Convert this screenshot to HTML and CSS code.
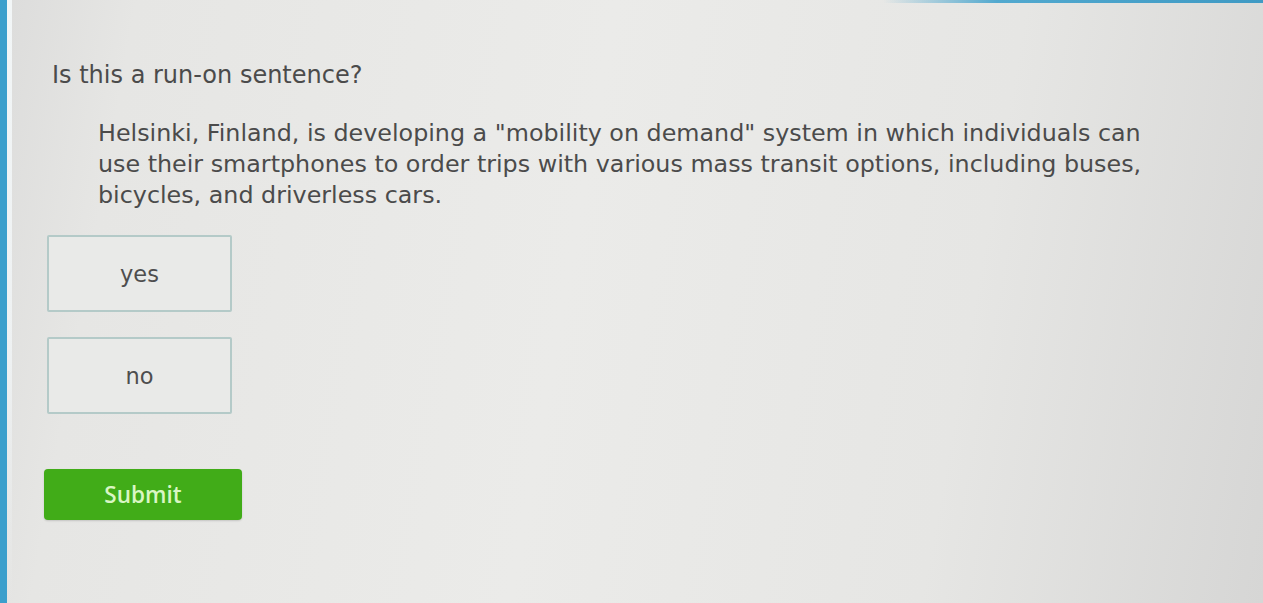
FILE: index.html
```html
<!DOCTYPE html>
<html>
<head>
<meta charset="utf-8">
<link rel="stylesheet" href="styles.css">
</head>
<body>
<div class="topline"></div>
<main class="page">
  <h1 class="question">Is this a run-on sentence?</h1>
  <p class="passage">Helsinki, Finland, is developing a "mobility on demand" system in which individuals can use their smartphones to order trips with various mass transit options, including buses, bicycles, and driverless cars.</p>
  <div class="options">
    <div class="option">yes</div>
    <div class="option">no</div>
  </div>
  <button class="submit">Submit</button>
</main>
</body>
</html>
```

FILE: styles.css
```css
html, body {
  margin: 0;
  height: 100%;
}
body {
  position: relative;
  overflow: hidden;
  font-family: "DejaVu Sans", Verdana, sans-serif;
  color: #4b4b4b;
  background: linear-gradient(100deg, #dcdcdb 0%, #e6e6e4 10%, #ebebe9 45%, #e6e6e4 75%, #d6d6d5 100%);
  border-left: 7px solid #3b9fcc;
  box-sizing: border-box;
}
body::before {
  content: "";
  position: absolute;
  left: 0;
  top: 0;
  bottom: 0;
  width: 5px;
  background: linear-gradient(180deg, #f2f6f7 0%, #eef1f2 60%, rgba(230,230,228,0) 100%);
}
.topline {
  position: absolute;
  top: 0;
  right: 0;
  width: 380px;
  height: 3px;
  background: linear-gradient(90deg, rgba(80,170,210,0) 0%, #52a9cf 30%, #3f9ac4 100%);
}
.page {
  padding: 60px 0 0 45px;
}
.question {
  margin: 0 0 28px 0;
  font-size: 24px;
  font-weight: normal;
  line-height: 30px;
}
.passage {
  margin: 0 0 24px 46px;
  width: 1052px;
  font-size: 23.8px;
  line-height: 31px;
}
.options {
  display: flex;
  flex-direction: column;
  gap: 25px;
  margin-left: -5px;
}
.option {
  width: 185px;
  height: 77px;
  box-sizing: border-box;
  border: 2px solid #b4cac8;
  border-radius: 2px;
  background: #e9eae8;
  display: flex;
  align-items: center;
  justify-content: center;
  font-size: 22.5px;
  color: #4e4e4e;
}
.submit {
  display: block;
  margin: 55px 0 0 -8px;
  width: 198px;
  height: 51px;
  border: none;
  border-radius: 4px;
  background: #41ac18;
  color: #d9f6c4;
  font-family: "Open Sans", sans-serif;
  font-weight: 600;
  font-size: 22.5px;
  box-shadow: 0 1px 2px rgba(0,0,0,0.15);
}
```
